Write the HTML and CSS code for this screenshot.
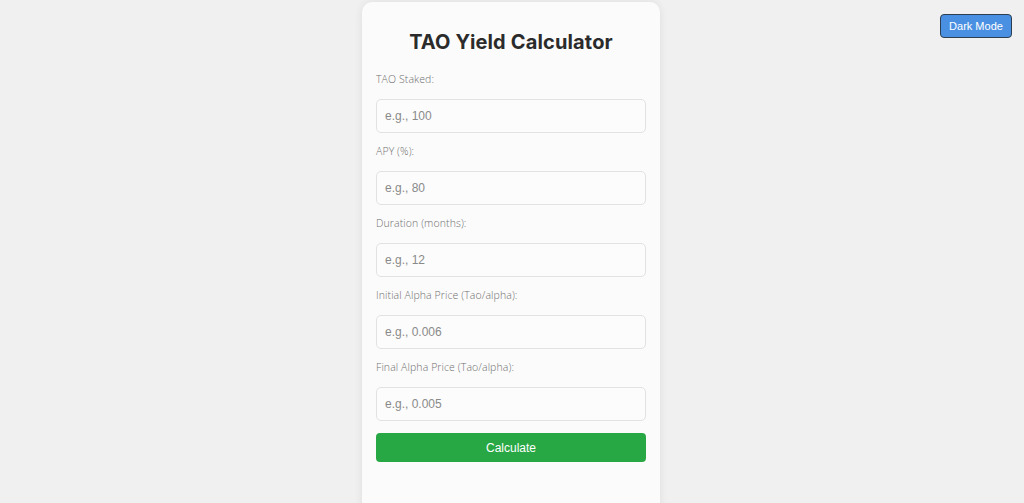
FILE: index.html
```html
<!DOCTYPE html>
<html lang="en">
<head>
<meta charset="utf-8">
<title>TAO Yield Calculator</title>
<link rel="stylesheet" href="styles.css">
</head>
<body>
<button class="theme-toggle">Dark Mode</button>
<main class="card">
  <h1 class="title">TAO Yield Calculator</h1>
  <form class="form">
    <label class="field-label">TAO Staked:</label>
    <input class="field-input" type="text" placeholder="e.g., 100">
    <label class="field-label">APY (%):</label>
    <input class="field-input" type="text" placeholder="e.g., 80">
    <label class="field-label">Duration (months):</label>
    <input class="field-input" type="text" placeholder="e.g., 12">
    <label class="field-label">Initial Alpha Price (Tao/alpha):</label>
    <input class="field-input" type="text" placeholder="e.g., 0.006">
    <label class="field-label">Final Alpha Price (Tao/alpha):</label>
    <input class="field-input" type="text" placeholder="e.g., 0.005">
    <button class="calc-btn" type="button">Calculate</button>
  </form>
</main>
</body>
</html>
```
FILE: styles.css
```css
html, body {
  margin: 0;
  padding: 0;
  height: 100%;
  overflow: hidden;
}
body {
  background: #f0f0f0;
  font-family: "Open Sans", "Liberation Sans", sans-serif;
  display: flex;
  justify-content: center;
  align-items: flex-start;
  padding-top: 2px;
  box-sizing: border-box;
}
.theme-toggle {
  position: absolute;
  top: 14px;
  right: 12px;
  width: 72px;
  height: 24px;
  background: #4a90e2;
  color: #fff;
  border: 1px solid #2c3e50;
  border-radius: 4px;
  font-family: "Liberation Sans", Arial, sans-serif;
  font-size: 11px;
  padding: 0;
}
.card {
  width: 298px;
  margin-right: 2px;
  box-sizing: border-box;
  background: #fbfbfb;
  border-radius: 10px;
  box-shadow: 0 0 8px rgba(0,0,0,0.08);
  padding: 28px 14px 60px;
  min-height: 560px;
}
.title {
  margin: 0 0 18px;
  text-align: center;
  font-family: "Inter", "Liberation Sans", sans-serif;
  font-weight: 700;
  font-size: 20px;
  line-height: 24px;
  color: #2b2b2b;
  letter-spacing: 0.15px;
}
.form {
  display: flex;
  flex-direction: column;
}
.field-label {
  font-size: 10.5px;
  line-height: 15px;
  color: #6f6f6f;
  margin-bottom: 12px;
  font-weight: 300;
  letter-spacing: 0.1px;
}
.field-input {
  height: 34px;
  box-sizing: border-box;
  border: 1px solid #e2e2e2;
  border-radius: 5px;
  background: #fcfcfc;
  padding: 0 8px;
  font-family: "Liberation Sans", Arial, sans-serif;
  font-size: 12px;
  margin-bottom: 11px;
  color: #333;
}
.field-input::placeholder {
  color: #8a8a8a;
}
.calc-btn {
  margin-top: 1px;
  height: 29px;
  background: #28a745;
  color: #fff;
  border: none;
  border-radius: 4px;
  font-family: "Liberation Sans", Arial, sans-serif;
  font-size: 12px;
}
```
